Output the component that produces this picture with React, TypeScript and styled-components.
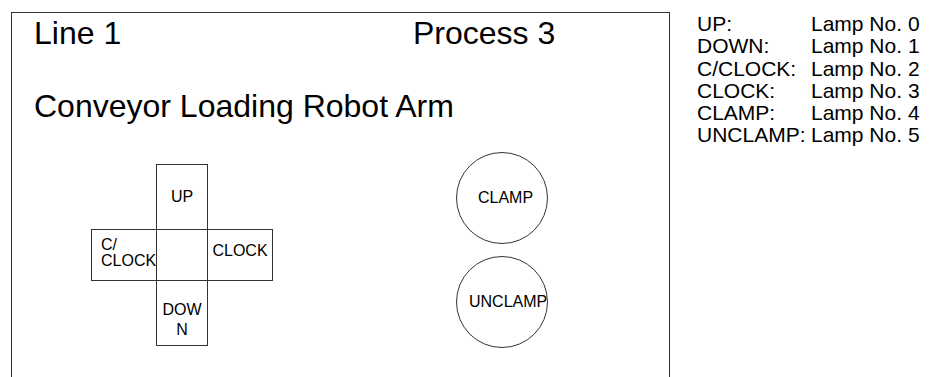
import React from "react";
import styled, { createGlobalStyle } from "styled-components";

const GlobalStyle = createGlobalStyle`
  html, body {
    margin: 0;
    padding: 0;
    background: #ffffff;
  }
  body {
    font-family: "Liberation Sans", Arial, sans-serif;
    color: #000000;
  }
`;

const Page = styled.div`
  display: flex;
  align-items: flex-start;
  box-sizing: border-box;
  height: 377px;
  padding: 12px 0 0 11px;
  overflow: hidden;
`;

const Frame = styled.div`
  flex-shrink: 0;
  box-sizing: border-box;
  width: 659px;
  height: 400px;
  border: 1px solid #333333;
  padding: 2px 0 0 22px;
`;

const Header = styled.div`
  display: grid;
  grid-template-columns: 379px auto;
  font-size: 32px;
`;

const Title = styled.div`
  margin-top: 36px;
  font-size: 32px;
`;

const Controls = styled.div`
  display: flex;
  align-items: flex-start;
  margin-top: 27px;
`;

const Cross = styled.div`
  display: grid;
  grid-template-columns: 65px 51px 65px;
  grid-template-rows: 65px 51px 65px;
  margin: 12px 0 0 57px;
  font-size: 16px;
`;

const Cell = styled.div<{
  $col: number;
  $row: number;
  $align?: "left" | "center";
  $dy?: number;
  $lh?: number;
}>`
  grid-column: ${(p) => p.$col};
  grid-row: ${(p) => p.$row};
  margin: 0 -1px -1px 0;
  box-sizing: border-box;
  border: 1px solid #333333;
  display: flex;
  align-items: center;
  justify-content: ${(p) => (p.$align === "left" ? "flex-start" : "center")};
  padding-left: ${(p) => (p.$align === "left" ? 9 : 1)}px;
  padding-right: 1px;
  padding-top: ${(p) => Math.max(0, (p.$dy ?? 0) * 2)}px;
  padding-bottom: ${(p) => Math.max(0, -(p.$dy ?? 0) * 2)}px;
  line-height: ${(p) => (p.$lh ? `${p.$lh}px` : "normal")};
  text-align: ${(p) => p.$align ?? "center"};
  word-break: ${(p) => (p.$align === "left" ? "normal" : "break-all")};
  min-width: 0;
`;

const CellText = styled.span`
  display: block;
  min-width: 0;
`;

const Buttons = styled.div`
  display: flex;
  flex-direction: column;
  gap: 12px;
  margin-left: 184px;
`;

const Circle = styled.div`
  box-sizing: border-box;
  width: 92px;
  height: 92px;
  border: 1px solid #333333;
  border-radius: 50%;
  display: flex;
  align-items: center;
  padding: 0 5px 0 12px;
  font-size: 16px;
`;

const CircleLabel = styled.span`
  flex: 1;
  min-width: 0;
  text-align: center;
  white-space: nowrap;
`;

const Legend = styled.div`
  display: grid;
  grid-template-columns: 114px auto;
  margin: 1px 0 0 27px;
  font-size: 21px;
  line-height: 22.3px;
  white-space: nowrap;
`;

const legend = [
  ["UP:", "Lamp No. 0"],
  ["DOWN:", "Lamp No. 1"],
  ["C/CLOCK:", "Lamp No. 2"],
  ["CLOCK:", "Lamp No. 3"],
  ["CLAMP:", "Lamp No. 4"],
  ["UNCLAMP:", "Lamp No. 5"],
];

export default function App() {
  return (
    <>
      <GlobalStyle />
      <Page>
        <Frame>
          <Header>
            <span>Line 1</span>
            <span>Process 3</span>
          </Header>
          <Title>Conveyor Loading Robot Arm</Title>
          <Controls>
            <Cross>
              <Cell $col={2} $row={1}>
                <CellText>UP</CellText>
              </Cell>
              <Cell $col={1} $row={2} $align="left" $dy={-2} $lh={16}>
                <CellText>
                  C/<wbr />CLOCK
                </CellText>
              </Cell>
              <Cell $col={2} $row={2} />
              <Cell $col={3} $row={2} $dy={-4}>
                <CellText>CLOCK</CellText>
              </Cell>
              <Cell $col={2} $row={3} $dy={7} $lh={20}>
                <CellText>DOWN</CellText>
              </Cell>
            </Cross>
            <Buttons>
              <Circle>
                <CircleLabel>CLAMP</CircleLabel>
              </Circle>
              <Circle>
                <CircleLabel>UNCLAMP</CircleLabel>
              </Circle>
            </Buttons>
          </Controls>
        </Frame>
        <Legend>
          {legend.map(([k, v]) => (
            <React.Fragment key={k}>
              <span>{k}</span>
              <span>{v}</span>
            </React.Fragment>
          ))}
        </Legend>
      </Page>
    </>
  );
}
